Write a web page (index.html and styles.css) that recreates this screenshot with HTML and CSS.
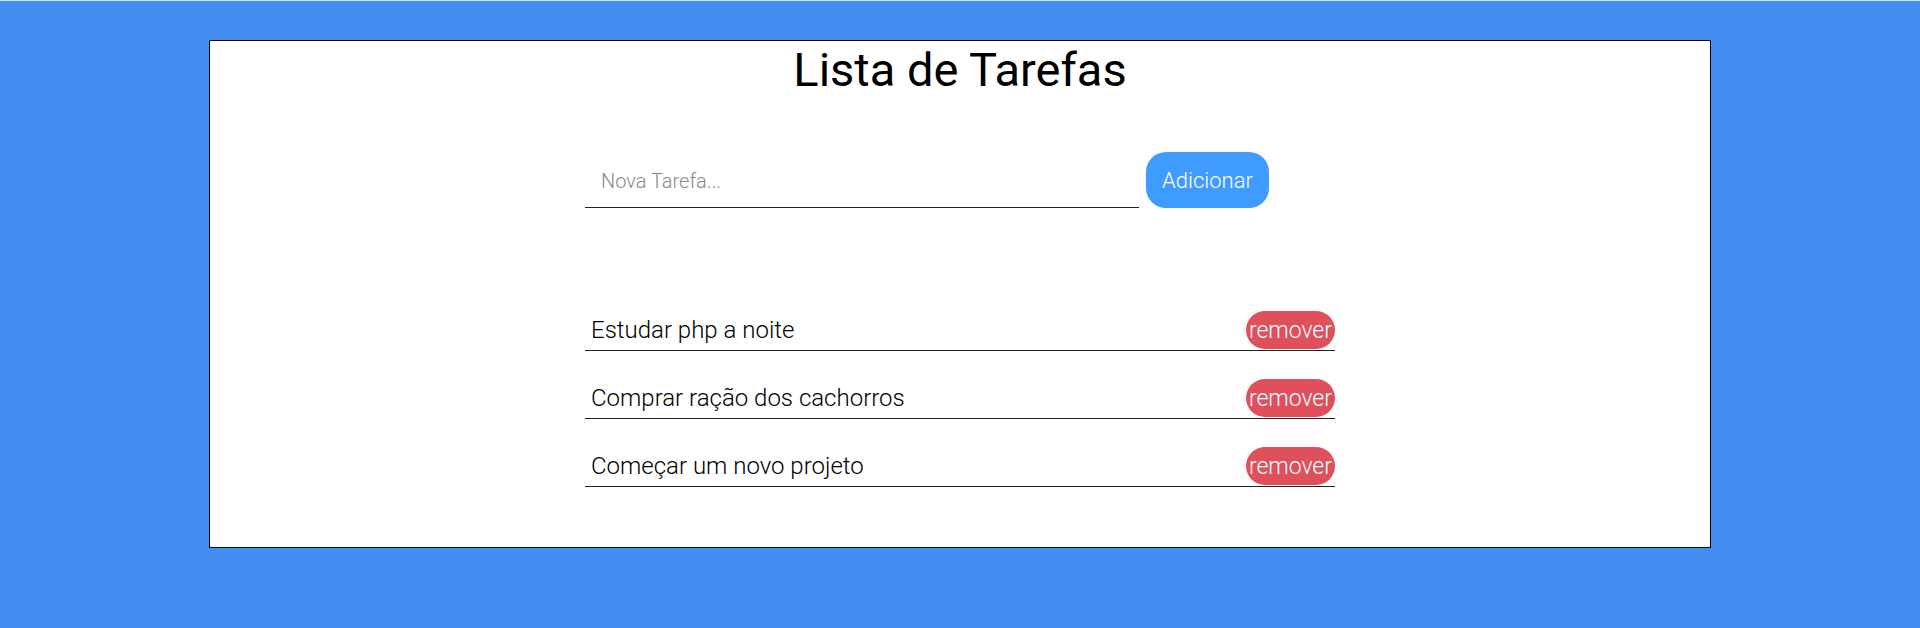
FILE: index.html
```html
<!DOCTYPE html>
<html lang="pt-BR">
<head>
<meta charset="utf-8">
<title>Lista de Tarefas</title>
<link rel="stylesheet" href="styles.css">
</head>
<body>
<div class="topline"></div>
<main class="card">
  <h1 class="title">Lista de Tarefas</h1>
  <form class="add-form">
    <input class="add-input" type="text" placeholder="Nova Tarefa...">
    <button class="add-btn" type="button">Adicionar</button>
  </form>
  <ul class="tasks">
    <li class="task"><span class="task-text">Estudar php a noite</span><button class="remove-btn" type="button">remover</button></li>
    <li class="task"><span class="task-text">Comprar ração dos cachorros</span><button class="remove-btn" type="button">remover</button></li>
    <li class="task"><span class="task-text">Começar um novo projeto</span><button class="remove-btn" type="button">remover</button></li>
  </ul>
</main>
</body>
</html>
```
FILE: styles.css
```css
html, body {
  margin: 0;
  padding: 0;
}
body {
  background: #448ef2;
  font-family: Roboto, "Liberation Sans", sans-serif;
  height: 628px;
  overflow: hidden;
}
.topline {
  height: 1px;
  background: #dedede;
}
.card {
  width: 1500px;
  margin: 39px auto 0;
  background: #fff;
  border: 1px solid #000;
  padding: 0 0 60px;
}
.title {
  margin: 0;
  text-align: center;
  font-size: 47px;
  font-weight: 400;
  color: #000;
  line-height: 58px;
}
.add-form {
  width: 750px;
  margin: 53px auto 0;
  display: flex;
  align-items: flex-end;
  gap: 7px;
}
.add-input {
  width: 554px;
  box-sizing: border-box;
  border: none;
  border-bottom: 1px solid #222;
  outline: none;
  font-family: Roboto, sans-serif;
  font-weight: 300;
  font-size: 20px;
  line-height: 23px;
  padding: 10px 16px 14px;
  color: #333;
}
.add-input::placeholder {
  color: #8a8a8a;
}
.add-btn {
  height: 56px;
  padding: 0 16px;
  border: none;
  border-radius: 20px;
  background: #3f9bfe;
  color: #fff;
  font-family: Roboto, sans-serif;
  font-weight: 300;
  font-size: 22px;
}
.tasks {
  list-style: none;
  width: 750px;
  margin: 102px auto 0;
  padding: 0;
  display: flex;
  flex-direction: column;
  gap: 27px;
}
.task {
  height: 40px;
  display: flex;
  align-items: center;
  justify-content: space-between;
  border-bottom: 1px solid #222;
  padding-left: 6px;
}
.task-text {
  font-weight: 300;
  font-size: 24px;
  color: #000;
}
.remove-btn {
  height: 38px;
  padding: 0 3px;
  border: none;
  border-radius: 19px;
  background: #e04f5c;
  color: #fff;
  font-family: Roboto, sans-serif;
  font-weight: 300;
  font-size: 23px;
}
```
